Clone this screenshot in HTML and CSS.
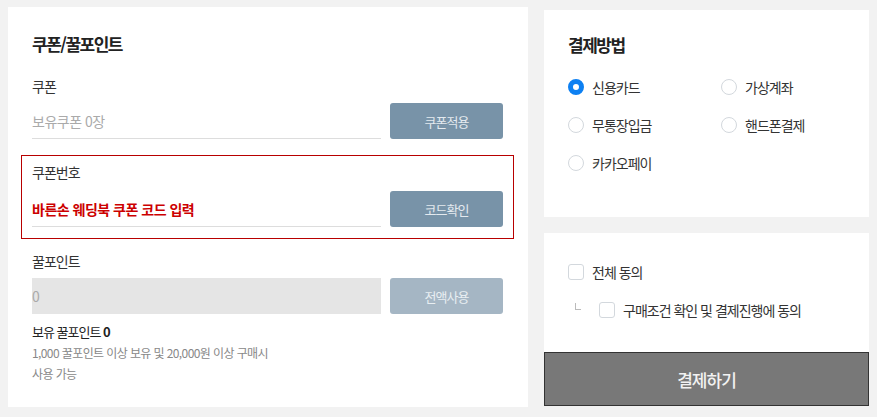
FILE: index.html
```html
<!DOCTYPE html>
<html lang="ko">
<head>
  <meta charset="UTF-8">
  <title>주문결제</title>
  <link rel="stylesheet" href="styles.css">
</head>
<body>
  <div class="order-wrap">

    <!-- 쿠폰 / 꿀포인트 -->
    <div class="box box-discount">
      <h2>쿠폰/꿀포인트</h2>

      <div class="field-label">쿠폰</div>
      <div class="field-row">
        <input type="text" class="line-input" placeholder="보유쿠폰 0장" readonly />
        <button type="button" class="btn-sub">쿠폰적용</button>
      </div>

      <div class="code-box">
        <div class="field-label">쿠폰번호</div>
        <div class="field-row">
          <input type="text" class="line-input code-input" placeholder="바른손 웨딩북 쿠폰 코드 입력" />
          <button type="button" class="btn-sub">코드확인</button>
        </div>
      </div>

      <div class="field-label point-label">꿀포인트</div>
      <div class="field-row">
        <input type="text" class="point-input" placeholder="0" disabled />
        <button type="button" class="btn-sub" disabled>전액사용</button>
      </div>

      <p class="point-own">보유 꿀포인트 <b>0</b></p>
      <p class="point-note">1,000 꿀포인트 이상 보유 및 20,000원 이상 구매시<br>사용 가능</p>
    </div>

    <div class="side">
      <!-- 결제방법 -->
      <div class="box box-pay">
        <h2>결제방법</h2>
        <div class="pay-list">
          <label class="radio"><input type="radio" name="pay" checked /><span class="mark"></span>신용카드</label>
          <label class="radio"><input type="radio" name="pay" /><span class="mark"></span>가상계좌</label>
          <label class="radio"><input type="radio" name="pay" /><span class="mark"></span>무통장입금</label>
          <label class="radio"><input type="radio" name="pay" /><span class="mark"></span>핸드폰결제</label>
          <label class="radio"><input type="radio" name="pay" /><span class="mark"></span>카카오페이</label>
        </div>
      </div>

      <!-- 약관 동의 -->
      <div class="box box-agree">
        <div class="agree-list">
          <label class="check"><input type="checkbox" /><span class="mark"></span>전체 동의</label>
          <label class="check sub"><span class="corner"></span><input type="checkbox" /><span class="mark"></span>구매조건 확인 및 결제진행에 동의</label>
        </div>
        <button type="button" class="btn-pay">결제하기</button>
      </div>
    </div>

  </div>
</body>
</html>
```

FILE: styles.css
```css
body {
  margin: 0;
  background-color: #f2f2f2;
  font-family: "Noto Sans CJK KR", "Noto Sans", sans-serif;
  color: #222;
}
.order-wrap {
  display: flex;
  align-items: flex-start;
  gap: 16px;
  padding: 7px 8px;
}
.box {
  background-color: #fff;
  box-sizing: border-box;
}
h2 {
  margin: 0;
  font-size: 17px;
  line-height: 24px;
  font-weight: 700;
  letter-spacing: -1.5px;
}

/* 쿠폰 / 꿀포인트 */
.box-discount {
  width: 520px;
  height: 400px;
  padding: 25px 25px 0 24px;
}
.field-label {
  margin-top: 20px;
  font-size: 14px;
  line-height: 20px;
  letter-spacing: -1px;
  color: #333;
}
.field-row {
  display: flex;
  gap: 9px;
  margin-top: 7px;
}
.line-input,
.point-input {
  width: 349px;
  height: 36px;
  box-sizing: border-box;
  border: none;
  border-bottom: 1px solid #ddd;
  padding: 0;
  font-family: inherit;
  font-size: 14px;
  letter-spacing: -0.5px;
  outline: none;
  background: none;
}
.line-input::placeholder {
  color: #aaa;
}
.code-input::placeholder {
  color: #c00;
  font-weight: 700;
}
.point-input {
  background-color: #e5e5e5;
  border-bottom: none;
}
.point-input::placeholder {
  color: #aaa;
}
.btn-sub {
  width: 113px;
  height: 36px;
  border: none;
  border-radius: 3px;
  background-color: #7893a8;
  color: #e4eaef;
  font-family: inherit;
  font-size: 13px;
  letter-spacing: -1px;
  cursor: pointer;
}
.btn-sub:disabled {
  background-color: #a5b6c4;
  color: #e8eef2;
}
.code-box {
  margin: 16px -11px 0 -11px;
  padding: 6px 10px 11px;
  border: 1px solid #b80000;
}
.code-box .field-label {
  margin-top: 0;
}
.code-box .field-row {
  margin-top: 9px;
}
.point-label {
  margin-top: 12px;
}
.point-own {
  margin: 8px 0 0;
  font-size: 13px;
  line-height: 20px;
  letter-spacing: -1px;
}
.point-note {
  margin: 0;
  font-size: 12px;
  line-height: 21px;
  letter-spacing: -0.6px;
  color: #888;
}

/* 결제방법 */
.side {
  display: flex;
  flex-direction: column;
  gap: 16px;
  width: 325px;
  margin-top: 3px;
}
.box-pay {
  height: 207px;
  padding: 23px 24px 0;
}
.pay-list {
  display: grid;
  grid-template-columns: 153px 1fr;
  row-gap: 18px;
  margin-top: 20px;
}
.radio,
.check {
  display: flex;
  align-items: center;
  height: 20px;
  font-size: 14px;
  letter-spacing: -1px;
  color: #333;
  cursor: pointer;
}
.radio input,
.check input {
  display: none;
}
.radio .mark {
  width: 16px;
  height: 16px;
  box-sizing: border-box;
  margin-right: 8px;
  border: 1px solid #d3d8dd;
  border-radius: 50%;
  background-color: #fff;
}
.radio input:checked + .mark {
  border: 5px solid #0d80f2;
}

/* 약관 동의 */
.box-agree {
  display: flex;
  flex-direction: column;
}
.agree-list {
  padding: 29px 24px 32px;
}
.check .mark {
  width: 16px;
  height: 16px;
  box-sizing: border-box;
  margin-right: 8px;
  border: 1px solid #d3d8dd;
  border-radius: 3px;
  background-color: #fff;
}
.check.sub {
  margin-top: 18px;
}
.corner {
  width: 5px;
  height: 6px;
  margin: -8px 18px 0 7px;
  border-left: 1px solid #bbb;
  border-bottom: 1px solid #bbb;
}
.btn-pay {
  height: 54px;
  border: 1px solid #333;
  background-color: #787878;
  color: #f2f2f2;
  font-family: inherit;
  font-size: 17px;
  font-weight: 500;
  letter-spacing: -1px;
  cursor: pointer;
}
```
